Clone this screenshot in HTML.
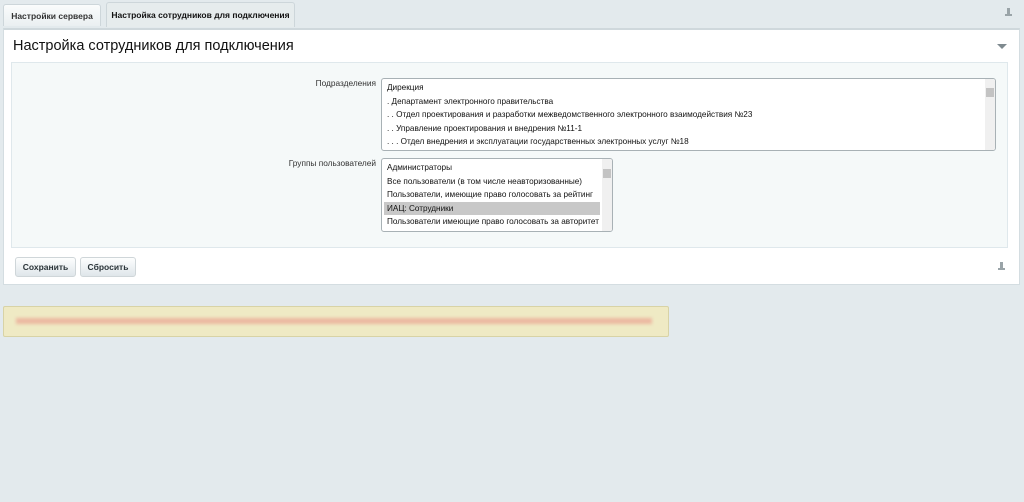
<!DOCTYPE html>
<html><head><meta charset="utf-8"><style>
*{box-sizing:border-box;margin:0;padding:0}
body{width:1024px;height:502px;background:#e3eaed;font-family:"Liberation Sans",Arial,sans-serif;position:relative;overflow:hidden;color:#000}
.abs{position:absolute}
.tab{position:absolute;border:1px solid #cdd6da;border-bottom:none;border-radius:3px 3px 0 0;font-size:8.5px;font-weight:bold;color:#2c3a40;text-align:center;white-space:nowrap}
.panel{left:3px;top:28px;width:1017px;height:257px;background:#fff;border:1px solid #d4dde1;border-top:2px solid #cfd8dc}
.inner{left:11px;top:62px;width:997px;height:186px;background:#f5f9f9;border:1px solid #dfe8ec}
.lbl{font-size:8.3px;color:#333;text-align:right;width:200px}
.sel{background:#fff;border:1px solid #a8b1b5;border-radius:3px;font-size:8.2px;color:#111;overflow:hidden}
.sel div{height:13.5px;line-height:13.5px;padding-left:5px;white-space:nowrap}
.sb{position:absolute;right:0;top:0;bottom:0;width:10px;background:#f0f0f0}
.btn{position:absolute;top:257px;height:20px;border:1px solid #cfd6d9;border-radius:3px;background:linear-gradient(#fdfefe,#dfe6ea);font-size:8.5px;font-weight:bold;color:#2a3338;text-align:center;line-height:18px}
</style></head><body>
<div class="tab" style="left:3px;top:4px;width:98px;height:22px;line-height:22px;background:linear-gradient(#fafcfc,#eaeff1);color:#333">Настройки сервера</div>
<div class="tab" style="left:106px;top:2px;width:189px;height:25px;line-height:24px;background:#e6eced;color:#111">Настройка сотрудников для подключения</div>
<div class="abs" style="left:1007px;top:8px;width:3px;height:8px;background:#9aa4a8"></div>
<div class="abs" style="left:1005px;top:14px;width:7px;height:2px;background:#9aa4a8"></div>
<div class="abs panel"></div>
<div class="abs" style="left:13px;top:38px;font-size:14.5px;color:#111">Настройка сотрудников для подключения</div>
<div class="abs" style="left:997px;top:44px;width:0;height:0;border-left:5px solid transparent;border-right:5px solid transparent;border-top:5px solid #7f8a8f"></div>
<div class="abs inner"></div>
<div class="abs lbl" style="left:176px;top:78px">Подразделения</div>
<div class="abs sel" style="left:381px;top:78px;width:615px;height:73px;padding-top:2px">
<div>Дирекция</div>
<div>. Департамент электронного правительства</div>
<div>. . Отдел проектирования и разработки межведомственного электронного взаимодействия №23</div>
<div>. . Управление проектирования и внедрения №11-1</div>
<div>. . . Отдел внедрения и эксплуатации государственных электронных услуг №18</div>
<span class="sb"><span class="abs" style="left:1px;top:9px;width:8px;height:9px;background:#c3c3c3"></span></span>
</div>
<div class="abs lbl" style="left:176px;top:158px">Группы пользователей</div>
<div class="abs sel" style="left:381px;top:158px;width:232px;height:74px;padding-top:2px">
<div>Администраторы</div>
<div>Все пользователи (в том числе неавторизованные)</div>
<div>Пользователи, имеющие право голосовать за рейтинг</div>
<div style="background:#c8c8c8;margin-right:12px;margin-left:2px;padding-left:3px">ИАЦ: Сотрудники</div>
<div>Пользователи имеющие право голосовать за авторитет</div>
<span class="sb"><span class="abs" style="left:1px;top:10px;width:8px;height:9px;background:#c3c3c3"></span></span>
</div>
<div class="btn" style="left:15px;width:61px">Сохранить</div>
<div class="btn" style="left:80px;width:56px">Сбросить</div>
<div class="abs" style="left:1000px;top:262px;width:3px;height:8px;background:#9aa4a8"></div>
<div class="abs" style="left:998px;top:268px;width:7px;height:2px;background:#9aa4a8"></div>
<div class="abs" style="left:3px;top:306px;width:666px;height:31px;background:#efeac4;border:1px solid #d8d3a6;border-radius:2px"></div>
<div class="abs" style="left:16px;top:318px;width:636px;height:6px;background:#eba895;filter:blur(1.5px);opacity:.75"></div>
</body></html>
